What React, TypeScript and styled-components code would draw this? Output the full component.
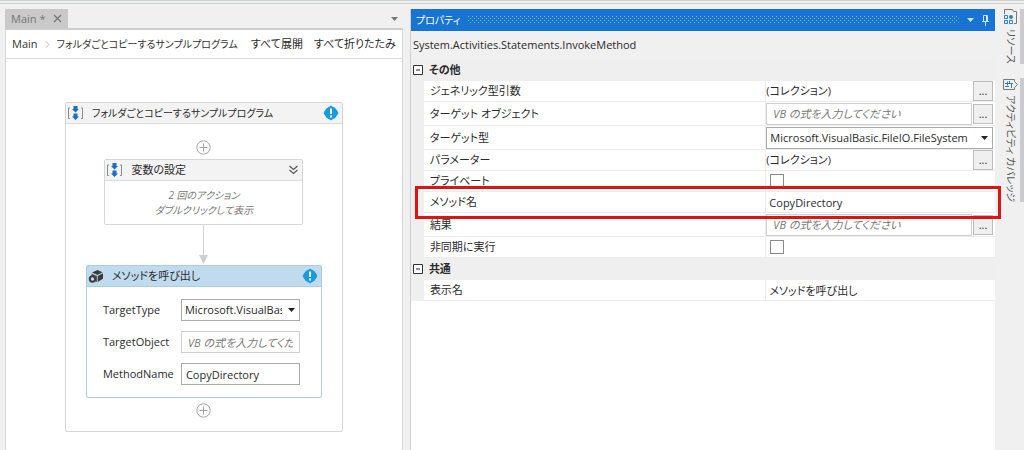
import React from "react";
import styled, { createGlobalStyle, css } from "styled-components";

const Global = createGlobalStyle`
  *, *::before, *::after { box-sizing: border-box; }
  body { margin: 0; background: #f0f0f0; }
  body, button, input, select {
    font-family: "Open Sans", "Noto Sans CJK JP", sans-serif;
    font-size: 11px;
    line-height: 16px;
    color: #2b2b2b;
    font-feature-settings: "palt";
  }
  button { padding: 0; border: 0; background: none; cursor: pointer; }
  svg { flex: none; }
`;

const Shell = styled.div`
  display: grid;
  grid-template-columns: minmax(0, 68fr) minmax(0, 100fr) 22px;
  column-gap: 7px;
  min-height: 100vh;
  padding: 5px 0 0 5px;
  border-top: 4px double #cdd3d0;
  overflow: hidden;
`;

/* Workflow designer */

const Designer = styled.main`
  display: flex;
  flex-direction: column;
  min-width: 0;
`;

const TabStrip = styled.div`
  display: flex;
  justify-content: space-between;
  align-items: stretch;
  height: 21px;
  border-bottom: 2px solid #cdcdcd;
`;

const DocumentTab = styled.div`
  display: flex;
  align-items: center;
  gap: 8px;
  padding: 0 6px;
  background: #c9c9c9;
  color: #767676;
`;

const IconButton = styled.button`
  display: flex;
  align-items: center;
  justify-content: center;
`;

const TabMenuButton = styled(IconButton)`
  width: 16px;
`;

const Canvas = styled.div`
  flex: 1;
  border: 1px solid #d4d4d4;
  border-top: 0;
  border-bottom: 0;
  background: #fff;
`;

const PathBar = styled.nav`
  display: flex;
  align-items: center;
  gap: 7px;
  height: 29px;
  padding: 0 6px;
  border-bottom: 1px solid #d9d9d9;
  white-space: nowrap;
`;

const PathLink = styled.a<{ $small?: boolean }>`
  color: #333;
  font-size: ${(p) => (p.$small ? 10 : 11)}px;
  text-decoration: none;
`;

const PathActions = styled.div`
  display: flex;
  gap: 11px;
  margin-left: auto;
`;

const Flow = styled.div`
  display: flex;
  flex-direction: column;
  align-items: center;
`;

const CanvasFlow = styled(Flow)`
  padding: 43px 16px 18px;
`;

const SequenceBody = styled(Flow)`
  padding: 11px 0 9px;
`;

const Activity = styled.section<{ $width: number; $selected?: boolean }>`
  width: ${(p) => p.$width}px;
  max-width: 100%;
  border: 1px solid ${(p) => (p.$selected ? "#a9cde2" : "#d6d6d6")};
  border-radius: 2px;
  background: #fff;
`;

const ActivityHeader = styled.header<{ $selected?: boolean }>`
  display: flex;
  align-items: center;
  gap: 8px;
  height: 21px;
  padding: 0 3px 0 1px;
  border-bottom: 1px solid ${(p) => (p.$selected ? "#a9cde2" : "#dcdcdc")};
  background: ${(p) => (p.$selected ? "#c1dbee" : "#f3f3f3")};
`;

const ActivityTitle = styled.h2<{ $small?: boolean }>`
  flex: 1;
  margin: 0;
  font-size: ${(p) => (p.$small ? 10 : 11)}px;
  font-weight: 400;
  white-space: nowrap;
`;

const AddButton = styled(IconButton)`
  height: 24px;
`;

const Summary = styled.p`
  height: 43px;
  margin: 0;
  padding: 7px 0 6px;
  color: #777;
  font-size: 10px;
  font-style: italic;
  line-height: 15px;
  text-align: center;
`;

const FieldGrid = styled.div`
  display: grid;
  grid-template-columns: 78px 119px;
  row-gap: 10px;
  align-items: center;
  padding: 12px 16px;
`;

const boxed = css`
  display: block;
  width: 100%;
  min-width: 0;
  height: 22px;
  margin: 0;
  padding: 0 4px;
  border: 1px solid #ababab;
  border-radius: 0;
  background: #fff;
  outline: 0;
`;

const TextBox = styled.input<{ $soft?: boolean }>`
  ${boxed}
  ${(p) => p.$soft && "border-color: #d0d0d0; padding: 0 6px;"}
  &::placeholder { color: #777; font-style: italic; opacity: 1; }
`;

const SelectFrame = styled.div`
  position: relative;
  width: 100%;
`;

const SelectBox = styled.select`
  ${boxed}
  appearance: none;
  padding: 0 17px 0 3px;
  overflow: hidden;
`;

const SelectArrow = styled.span`
  position: absolute;
  top: 0;
  right: 5px;
  bottom: 0;
  display: flex;
  align-items: center;
  pointer-events: none;
`;

/* Properties panel */

const Panel = styled.aside`
  display: flex;
  flex-direction: column;
  min-width: 0;
  border-left: 1px solid #cfcfcf;
`;

const PanelTitle = styled.header`
  display: flex;
  align-items: center;
  gap: 8px;
  height: 22px;
  padding: 0 6px 0 5px;
  background: #1874d2;
  color: #fff;
`;

const PanelHeading = styled.h1`
  margin: 0;
  font-size: 10px;
  font-weight: 400;
`;

const Grip = styled.svg`
  flex: 1;
  height: 8px;
  min-width: 0;
`;

const TypeName = styled.div`
  height: 28px;
  padding: 6px 2px;
`;

const Category = styled.h2`
  display: flex;
  align-items: center;
  gap: 6px;
  height: 22px;
  margin: 0;
  padding: 0 2px;
  background: #efefef;
  font-size: 11px;
  font-weight: 700;
`;

const Row = styled.div<{ $tall?: boolean }>`
  position: relative;
  display: grid;
  grid-template-columns: 13px minmax(0, 342fr) minmax(0, 230fr);
  height: ${(p) => (p.$tall ? 24 : 21)}px;
`;

const Gutter = styled.span`
  background: #efefef;
`;

const NameCell = styled.label`
  display: flex;
  align-items: center;
  padding-left: 6px;
  border-bottom: 1px solid #ececec;
  background: #fff;
`;

const ValueCell = styled.div`
  display: flex;
  align-items: center;
  gap: 1px;
  padding-right: 2px;
  border-left: 1px solid #ececec;
  border-bottom: 1px solid #ececec;
  background: #fff;
`;

const ValueText = styled.span`
  flex: 1;
`;

const PlainInput = styled.input`
  flex: 1;
  min-width: 0;
  height: 18px;
  padding: 0 3px;
  border: 0;
  outline: 0;
  background: none;
`;

const CheckBox = styled.input`
  appearance: none;
  width: 14px;
  height: 14px;
  margin: 0 4px;
  border: 1px solid #8a8a8a;
  background: #fff;
`;

const MoreButton = styled.button`
  flex: none;
  width: 20px;
  height: 20px;
  border: 1px solid #bdbdbd;
  background: #efefef;
`;

const Highlight = styled.div`
  position: absolute;
  z-index: 1;
  top: -6px;
  right: -6px;
  bottom: -6px;
  left: 4px;
  border: 3px solid #dc1414;
  pointer-events: none;
`;

const PanelRest = styled.div`
  flex: 1;
  background: #fff;
`;

/* Docked side tabs */

const Rail = styled.nav`
  display: flex;
  flex-direction: column;
  align-items: stretch;
  gap: 14px;
`;

const RailTab = styled.button`
  display: flex;
  flex-direction: column;
  align-items: center;
  gap: 4px;
  padding-right: 1px;
  border-right: 4px solid #cbcbcf;
  color: #555;
`;

const RailLabel = styled.span`
  font-size: 10px;
  writing-mode: vertical-rl;
  text-orientation: sideways;
  white-space: nowrap;
`;

const SequenceIcon = () => (
  <svg width="17" height="16" viewBox="0 0 17 16" fill="none" aria-hidden="true">
    <path d="M3 3H1.500v10.500H3M14 3h1.500v10.500H14" stroke="#8d8d8d" />
    <path d="M6.500 1h4v3h1.500L8.500 7.500 5 4h1.500zM6.500 8.500h4v3h1.500l-3.500 3.500L5 11.500h1.500z" fill="#1a6fc4" />
  </svg>
);

const AlertIcon = () => (
  <svg width="16" height="16" viewBox="0 0 16 16" aria-hidden="true">
    <path d="M8 .5C10 2 14 5 15.500 8 14 11 10 14 8 15.500 6 14 2 11 .5 8 2 5 6 2 8 .5z" fill="#1a9bdc" />
    <circle cx="8" cy="8" r="6.500" fill="#1a9bdc" />
    <path d="M7 3.500h2v5.500H7zM7 10.500h2v2H7z" fill="#fff" />
  </svg>
);

const PlusIcon = () => (
  <svg width="15" height="15" viewBox="0 0 15 15" fill="none" stroke="#a3a3a3" aria-hidden="true">
    <circle cx="7.500" cy="7.500" r="6.700" />
    <path d="M7.500 3.500v8M3.500 7.500h8" />
  </svg>
);

const MethodIcon = () => (
  <svg width="16" height="16" viewBox="0 0 16 16" aria-hidden="true">
    <path d="M4 4.500 9.500 2 14.500 4.200 9.500 7z" fill="#3c3c3c" />
    <path d="M3.500 5.500l5.500 2.500v6L7.500 13.500 3.500 8z" fill="#5a5a5a" />
    <path d="M9.700 8 15 5.200v5.500L9.700 14z" fill="#3c3c3c" />
    <circle cx="4.500" cy="11" r="2.700" fill="#c1dbee" stroke="#3c3c3c" strokeWidth="2" />
  </svg>
);

const ExpandIcon = () => (
  <svg width="11" height="10" viewBox="0 0 11 10" fill="none" stroke="#555" strokeWidth="1.200" aria-hidden="true">
    <path d="M1.500 1l4 3.500L9.500 1M1.500 5l4 3.500 4-3.500" />
  </svg>
);

const Connector = () => (
  <svg width="9" height="40" viewBox="0 0 9 40" aria-hidden="true">
    <path d="M4 0h1v31H4z" fill="#d3d3d3" />
    <path d="M0 30h9l-4.500 9z" fill="#cfcfcf" />
  </svg>
);

const Caret = ({ color = "#222" }: { color?: string }) => (
  <svg width="7" height="4" viewBox="0 0 7 4" aria-hidden="true">
    <path d="M0 0h7L3.500 4z" fill={color} />
  </svg>
);

const CloseIcon = () => (
  <svg width="9" height="9" viewBox="0 0 9 9" stroke="#777" strokeWidth="1.300" aria-hidden="true">
    <path d="M1 1l7 7M8 1L1 8" />
  </svg>
);

const PathChevron = () => (
  <svg width="5" height="7" viewBox="0 0 5 7" fill="none" stroke="#bbb" aria-hidden="true">
    <path d="M1 .5l3 3-3 3" />
  </svg>
);

const PinIcon = () => (
  <svg width="7" height="11" viewBox="0 0 7 11" fill="none" stroke="#cfe4f8" aria-hidden="true">
    <path d="M1.500 6V.5h4V6M0 6.500h7M3.500 7v4M4.500 1v5" />
  </svg>
);

const CollapseIcon = () => (
  <svg width="10" height="10" viewBox="0 0 10 10" aria-hidden="true">
    <path d="M.5.5h9v9h-9z" fill="#fff" stroke="#333" />
    <path d="M3 5h4" stroke="#222" />
  </svg>
);

const ResourcesIcon = () => (
  <svg width="15" height="16" viewBox="0 0 15 16" fill="none" aria-hidden="true">
    <path d="M1.500 5V.5h8l1 2h3v12H11" stroke="#777" />
    <path d="M1.500 6.500h3v3h-3zM1.500 11.500h3v3h-3zM6.500 11.500h3v3h-3z" stroke="#2b7fd0" />
    <circle cx="8" cy="8" r="2" fill="#2b7fd0" />
  </svg>
);

const CoverageIcon = () => (
  <svg width="15" height="13" viewBox="0 0 15 13" fill="none" aria-hidden="true">
    <path d="M.5 1.500h11v2l3 3-3 3v2H.5z" stroke="#777" />
    <path d="M2 5.500h8M2 8.500h4M4.500 3.500v4M8.500 6v4M6.500 3v2" stroke="#2b7fd0" />
  </svg>
);

const placeholder = "VB の式を入力してください";
const fileSystemType = "Microsoft.VisualBasic.FileIO.FileSystem";

function TypeSelect({ id }: { id: string }) {
  return (
    <SelectFrame>
      <SelectBox id={id}>
        <option>{fileSystemType}</option>
      </SelectBox>
      <SelectArrow>
        <Caret />
      </SelectArrow>
    </SelectFrame>
  );
}

type Kind = "collection" | "expression" | "type" | "check" | "text";

interface Property {
  id: string;
  name: string;
  kind: Kind;
  value?: string;
  highlighted?: boolean;
}

const otherProperties: Property[] = [
  { id: "generic", name: "ジェネリック型引数", kind: "collection" },
  { id: "target-object", name: "ターゲット オブジェクト", kind: "expression" },
  { id: "target-type", name: "ターゲット型", kind: "type" },
  { id: "parameters", name: "パラメーター", kind: "collection" },
  { id: "private", name: "プライベート", kind: "check" },
  { id: "method", name: "メソッド名", kind: "text", value: "CopyDirectory", highlighted: true },
  { id: "result", name: "結果", kind: "expression" },
  { id: "async", name: "非同期に実行", kind: "check" },
];

const commonProperties: Property[] = [
  { id: "display-name", name: "表示名", kind: "text", value: "メソッドを呼び出し" },
];

function PropertyRow({ id, name, kind, value, highlighted }: Property) {
  const hasMore = kind === "collection" || kind === "expression";
  return (
    <Row $tall={kind === "expression" || kind === "type"}>
      <Gutter />
      <NameCell htmlFor={id}>{name}</NameCell>
      <ValueCell>
        {kind === "collection" && <ValueText>(コレクション)</ValueText>}
        {kind === "expression" && <TextBox id={id} $soft placeholder={placeholder} />}
        {kind === "type" && <TypeSelect id={id} />}
        {kind === "check" && <CheckBox id={id} type="checkbox" />}
        {kind === "text" && <PlainInput id={id} defaultValue={value} />}
        {hasMore && (
          <MoreButton id={kind === "collection" ? id : undefined} type="button">
            ...
          </MoreButton>
        )}
      </ValueCell>
      {highlighted && <Highlight />}
    </Row>
  );
}

export default function App() {
  return (
    <>
      <Global />
      <Shell>
        <Designer>
          <TabStrip>
            <DocumentTab>
              Main *
              <IconButton type="button" aria-label="閉じる">
                <CloseIcon />
              </IconButton>
            </DocumentTab>
            <TabMenuButton type="button" aria-label="タブ一覧">
              <Caret color="#777" />
            </TabMenuButton>
          </TabStrip>
          <Canvas>
            <PathBar>
              <PathLink href="#main">Main</PathLink>
              <PathChevron />
              <PathLink href="#copy" $small>
                フォルダごとコピーするサンプルプログラム
              </PathLink>
              <PathActions>
                <button type="button">すべて展開</button>
                <button type="button">すべて折りたたみ</button>
              </PathActions>
            </PathBar>
            <CanvasFlow>
              <Activity $width={278}>
                <ActivityHeader>
                  <SequenceIcon />
                  <ActivityTitle $small>フォルダごとコピーするサンプルプログラム</ActivityTitle>
                  <AlertIcon />
                </ActivityHeader>
                <SequenceBody>
                  <AddButton type="button" aria-label="追加">
                    <PlusIcon />
                  </AddButton>
                  <Activity $width={199}>
                    <ActivityHeader>
                      <SequenceIcon />
                      <ActivityTitle>変数の設定</ActivityTitle>
                      <IconButton type="button" aria-label="展開">
                        <ExpandIcon />
                      </IconButton>
                    </ActivityHeader>
                    <Summary>
                      2 回のアクション
                      <br />
                      ダブルクリックして表示
                    </Summary>
                  </Activity>
                  <Connector />
                  <Activity $width={236} $selected>
                    <ActivityHeader $selected>
                      <MethodIcon />
                      <ActivityTitle>メソッドを呼び出し</ActivityTitle>
                      <AlertIcon />
                    </ActivityHeader>
                    <FieldGrid>
                      <label htmlFor="card-type">TargetType</label>
                      <TypeSelect id="card-type" />
                      <label htmlFor="card-object">TargetObject</label>
                      <TextBox id="card-object" $soft placeholder={placeholder} />
                      <label htmlFor="card-method">MethodName</label>
                      <TextBox id="card-method" defaultValue="CopyDirectory" />
                    </FieldGrid>
                  </Activity>
                  <AddButton type="button" aria-label="追加">
                    <PlusIcon />
                  </AddButton>
                </SequenceBody>
              </Activity>
            </CanvasFlow>
          </Canvas>
        </Designer>

        <Panel>
          <PanelTitle>
            <PanelHeading>プロパティ</PanelHeading>
            <Grip aria-hidden="true">
              <defs>
                <pattern id="dots" width="4" height="4" patternUnits="userSpaceOnUse">
                  <path d="M0 0h1v1H0zM2 2h1v1H2z" fill="#7db6ef" />
                </pattern>
              </defs>
              <rect width="100%" height="7" fill="url(#dots)" />
            </Grip>
            <IconButton type="button" aria-label="メニュー">
              <Caret color="#cfe4f8" />
            </IconButton>
            <IconButton type="button" aria-label="固定">
              <PinIcon />
            </IconButton>
          </PanelTitle>
          <TypeName>System.Activities.Statements.InvokeMethod</TypeName>
          <Category>
            <CollapseIcon />
            その他
          </Category>
          {otherProperties.map((p) => (
            <PropertyRow key={p.id} {...p} />
          ))}
          <Category>
            <CollapseIcon />
            共通
          </Category>
          {commonProperties.map((p) => (
            <PropertyRow key={p.id} {...p} />
          ))}
          <PanelRest />
        </Panel>

        <Rail>
          <RailTab type="button">
            <ResourcesIcon />
            <RailLabel>リソース</RailLabel>
          </RailTab>
          <RailTab type="button">
            <CoverageIcon />
            <RailLabel>アクティビティ カバレッジ</RailLabel>
          </RailTab>
        </Rail>
      </Shell>
    </>
  );
}
